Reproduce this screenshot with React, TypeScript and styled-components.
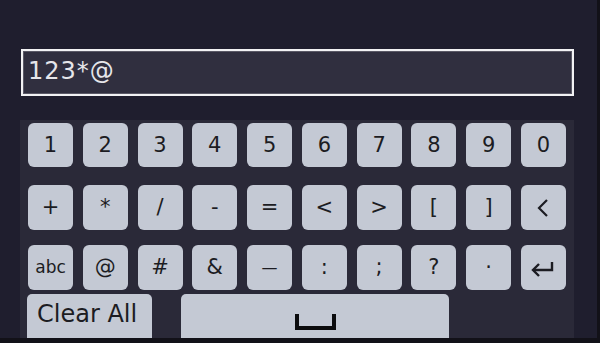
import React from "react";
import styled, { createGlobalStyle } from "styled-components";

const GlobalStyle = createGlobalStyle`
  html, body {
    margin: 0;
    padding: 0;
    background: #121118;
  }
  * {
    box-sizing: border-box;
  }
`;

const Screen = styled.div`
  width: 600px;
  height: 343px;
  background: #121118;
  overflow: hidden;
`;

const Main = styled.div`
  width: 597px;
  height: 338px;
  background: #1f1e2e;
  padding: 49px 0 0 20px;
  display: flex;
  flex-direction: column;
  font-family: "DejaVu Sans", Verdana, sans-serif;
`;

const Field = styled.div`
  margin-left: 1px;
  width: 553px;
  height: 47px;
  border: 2px solid #f2f2f4;
  box-shadow: inset 0 0 0 1px #5a5966;
  background: #302f3f;
  color: #e6e6ea;
  font-size: 24px;
  letter-spacing: 1px;
  padding: 0 0 3px 5px;
  display: flex;
  align-items: center;
`;

const Panel = styled.div`
  margin-top: 24px;
  width: 554px;
  flex: 1;
  background: #2a2938;
  padding: 3px 8px 0 8px;
  display: flex;
  flex-direction: column;
`;

const Row = styled.div<{ $mt: number; $h: number }>`
  margin-top: ${(p) => p.$mt}px;
  height: ${(p) => p.$h}px;
  display: flex;
  justify-content: space-between;
`;

const BottomRow = styled.div`
  margin-top: 4px;
  height: 44px;
  display: flex;
  margin-left: -1px;
`;

const Key = styled.button<{ $size?: number; $w?: number }>`
  width: ${(p) => p.$w ?? 45}px;
  height: 100%;
  border: none;
  border-radius: 6px;
  background: #c4c9d4;
  color: #1c1c22;
  font-family: "DejaVu Sans", Verdana, sans-serif;
  font-size: ${(p) => p.$size ?? 21}px;
  padding: 0;
  display: flex;
  align-items: center;
  justify-content: center;
  line-height: 1;
`;

const ClearKey = styled(Key)`
  justify-content: flex-start;
  align-items: flex-start;
  padding: 8px 0 0 10px;
  font-size: 24px;
  border-radius: 5px 5px 0 0;
`;

const SpaceKey = styled(Key)`
  margin-left: 29px;
  border-radius: 5px 5px 0 0;
  align-items: flex-end;
  padding-bottom: 8px;
`;

const row1 = ["1", "2", "3", "4", "5", "6", "7", "8", "9", "0"];
const row2 = ["+", "*", "/", "-", "=", "<", ">", "[", "]"];
const row3 = ["@", "#", "&", "—", ":", ";", "?", "·"];

const BackIcon = () => (
  <svg width="16" height="20" viewBox="0 0 16 20">
    <polyline points="12,2 4,10 12,18" fill="none" stroke="#1c1c22" strokeWidth="2.2" />
  </svg>
);

const EnterIcon = () => (
  <svg width="26" height="18" viewBox="0 0 26 18">
    <polyline points="22,3 22,11 3,11" fill="none" stroke="#1c1c22" strokeWidth="2.4" />
    <polyline points="9,5 3,11 9,17" fill="none" stroke="#1c1c22" strokeWidth="2.4" />
  </svg>
);

const SpaceIcon = () => (
  <svg width="41" height="16" viewBox="0 0 41 16">
    <polyline points="2,0 2,14 39,14 39,0" fill="none" stroke="#0c0c0e" strokeWidth="4" />
  </svg>
);

export default function App() {
  return (
    <Screen>
      <GlobalStyle />
      <Main>
        <Field>123*@</Field>
        <Panel>
          <Row $mt={0} $h={44}>
            {row1.map((k) => (
              <Key key={k}>{k}</Key>
            ))}
          </Row>
          <Row $mt={18} $h={45}>
            {row2.map((k) => (
              <Key key={k}>{k}</Key>
            ))}
            <Key aria-label="backspace">
              <BackIcon />
            </Key>
          </Row>
          <Row $mt={15} $h={45}>
            <Key $size={17}>abc</Key>
            {row3.map((k) => (
              <Key key={k} $size={k === "—" ? 16 : 21}>
                {k}
              </Key>
            ))}
            <Key aria-label="enter">
              <EnterIcon />
            </Key>
          </Row>
          <BottomRow>
            <ClearKey $w={125}>Clear All</ClearKey>
            <SpaceKey $w={268} aria-label="space">
              <SpaceIcon />
            </SpaceKey>
          </BottomRow>
        </Panel>
      </Main>
    </Screen>
  );
}
